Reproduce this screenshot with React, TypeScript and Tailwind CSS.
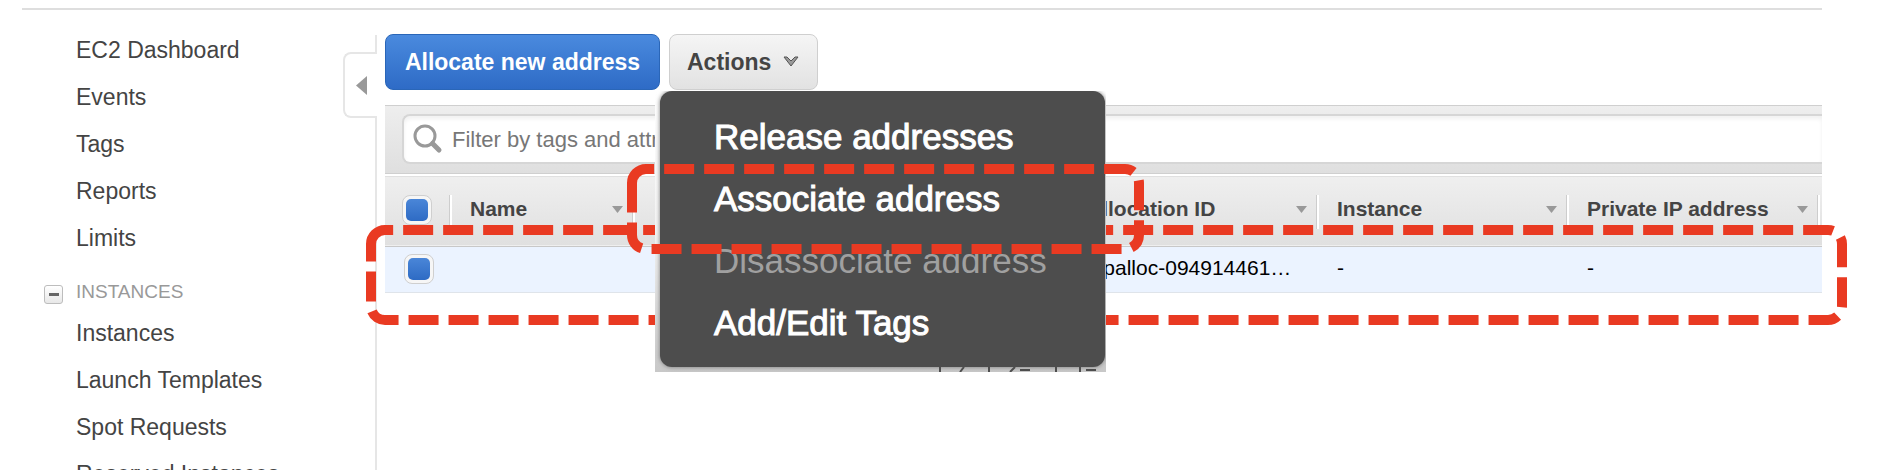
import React from "react";

const topLinks = ["EC2 Dashboard", "Events", "Tags", "Reports", "Limits"];
const instanceLinks = ["Instances", "Launch Templates", "Spot Requests", "Reserved Instances"];

const menuItems = [
  { label: "Release addresses" },
  { label: "Associate address" },
  { label: "Disassociate address", disabled: true },
  { label: "Add/Edit Tags" },
];

function NavList({ items }: { items: string[] }) {
  return (
    <ul>
      {items.map((item) => (
        <li key={item} className="h-[47px]">
          <a href="#" className="block pl-[76px] leading-[47px] whitespace-nowrap">
            {item}
          </a>
        </li>
      ))}
    </ul>
  );
}

function BlueCheckbox({ label }: { label: string }) {
  return (
    <input
      type="checkbox"
      defaultChecked
      aria-label={label}
      className="block size-[30px] appearance-none rounded-lg border border-[#cfcfcf] bg-[#f6f6f6] p-[3px] before:block before:size-[22px] before:rounded-[5px] before:bg-linear-to-b before:from-[#4a86d8] before:to-[#2e6bc4] before:content-['']"
    />
  );
}

function HeaderCell({ label }: { label: string }) {
  return (
    <th scope="col" className="p-0 text-left align-top font-bold">
      <div className="mt-[19px] flex h-[34px] items-center justify-between border-r-2 border-r-white pr-[10px] pb-[6px] pl-[18px] shadow-[inset_-1px_0_0_#cdcdcd]">
        <span className="whitespace-nowrap">{label}</span>
        <svg width="11" height="7" viewBox="0 0 11 7" aria-hidden="true">
          <path d="M0 0H11L5.500 7Z" fill="#999" />
        </svg>
      </div>
    </th>
  );
}

export default function App() {
  return (
    <div className="relative h-screen overflow-hidden bg-white font-['Liberation_Sans',Arial,sans-serif] text-[23px] text-[#444]">
      <div className="mr-[62px] ml-[22px] pt-2">
        <div className="h-[2px] bg-[#dedede]" />
      </div>

      <div className="flex">
        <nav aria-label="EC2" className="w-[343px] shrink-0 pt-[17px]">
          <NavList items={topLinks} />
          <div className="mt-[12px] flex h-[36px] items-center pl-[44px]">
            <button
              type="button"
              aria-label="Collapse instances"
              className="mt-[4px] flex size-[19px] items-center justify-center rounded-[3px] border border-[#bdbdbd] bg-linear-to-b from-white to-[#e8e8e8]"
            >
              <span className="h-[3px] w-[10px] bg-[#666]" />
            </button>
            <span className="ml-[13px] text-[19px] text-[#999]">INSTANCES</span>
          </div>
          <NavList items={instanceLinks} />
        </nav>

        <div className="flex w-[34px] shrink-0 flex-col pt-[25px]">
          <div className="h-[17px] border-r-2 border-[#e6e6e6]" />
          <button
            type="button"
            aria-label="Collapse sidebar"
            className="flex h-[66px] items-center justify-center rounded-l-lg border-2 border-r-0 border-[#e6e6e6]"
          >
            <svg width="11" height="19" viewBox="0 0 11 19" aria-hidden="true">
              <path d="M11 0V19L0 9.500Z" fill="#999" />
            </svg>
          </button>
          <div className="h-[400px] border-r-2 border-[#e6e6e6]" />
        </div>

        <main className="mr-[62px] ml-2 min-w-0 flex-1 pt-[24px]">
          <div className="flex items-start gap-[9px]">
            <button
              type="button"
              className="h-[56px] w-[275px] rounded-lg border border-[#2a66b8] bg-linear-to-b from-[#4a8ade] to-[#2e6bc6] font-bold whitespace-nowrap text-white"
            >
              Allocate new address
            </button>
            <button
              type="button"
              className="flex h-[56px] w-[149px] items-center gap-3 rounded-lg border border-[#cfcfcf] bg-linear-to-b from-[#f5f5f5] to-[#e2e2e2] pl-[17px] font-bold"
            >
              Actions
              <svg width="16" height="12" viewBox="0 0 16 12" aria-hidden="true">
                <path d="M1 1H4L8 5L12 1H15L8 10Z" fill="#999" stroke="#555" strokeLinejoin="round" />
              </svg>
            </button>
          </div>

          <div className="mt-[15px] h-[69px] border-y border-[#cfcfcf] bg-linear-to-b from-[#eeeeee] to-[#dfdfdf] pt-[8px] pl-[17px]">
            <label className="flex h-[50px] items-center rounded-l-lg border-2 border-r-0 border-[#d6d6d6] bg-white pl-[9px] shadow-[inset_0_3px_4px_#f1f1f1]">
              <svg width="30" height="30" viewBox="0 0 30 30" aria-hidden="true">
                <circle cx="12" cy="12" r="10" fill="none" stroke="#999" strokeWidth="3" />
                <path d="M19.500 19.500L26 26" stroke="#999" strokeWidth="5" strokeLinecap="round" />
              </svg>
              <input
                type="text"
                aria-label="Filter addresses"
                placeholder="Filter by tags and attributes or search by keyword"
                className="ml-[9px] min-w-0 flex-1 bg-transparent text-[22px] outline-none placeholder:text-[#777]"
              />
            </label>
          </div>

          <table className="w-full table-fixed border-collapse text-[21px]">
            <colgroup>
              <col className="w-[67px]" />
              <col className="w-[183px]" />
              <col className="w-[434px]" />
              <col className="w-[250px]" />
              <col className="w-[250px]" />
              <col className="w-[251px]" />
              <col />
            </colgroup>
            <thead>
              <tr className="h-[71px] border-t-2 border-b border-t-white border-b-[#c8c8c8] bg-linear-to-b from-[#efefef] to-[#e0e0e0]">
                <th scope="col" className="p-0 align-top">
                  <div className="mt-[19px] h-[34px] border-r-2 border-r-white pl-[17px] shadow-[inset_-1px_0_0_#cdcdcd]">
                    <BlueCheckbox label="Select all addresses" />
                  </div>
                </th>
                <HeaderCell label="Name" />
                <HeaderCell label="" />
                <HeaderCell label="Allocation ID" />
                <HeaderCell label="Instance" />
                <HeaderCell label="Private IP address" />
                <th className="p-0" />
              </tr>
            </thead>
            <tbody>
              <tr className="h-[46px] border-b border-[#dfe4ea] bg-[#ebf3ff] text-black">
                <td className="p-0 pl-[19px]">
                  <BlueCheckbox label="Select address" />
                </td>
                <td />
                <td />
                <td className="p-0 pb-[2px] pl-[18px]">
                  <div className="whitespace-nowrap">eipalloc-094914461…</div>
                </td>
                <td className="p-0 pb-[2px] pl-[18px]">-</td>
                <td className="p-0 pb-[2px] pl-[18px]">-</td>
                <td />
              </tr>
            </tbody>
          </table>
        </main>
      </div>

      <svg className="pointer-events-none absolute top-0 left-0" width="1884" height="470" aria-hidden="true">
        <path
          d="M371 244A14 14 0 0 1 385 230H1828A14 14 0 0 1 1842 244V306A14 14 0 0 1 1828 320H385A14 14 0 0 1 371 306V244"
          fill="none"
          stroke="#e93a22"
          strokeWidth="10"
          strokeDasharray="30 10"
        />
      </svg>

      <div className="absolute top-[91px] left-[655px] w-[451px] overflow-hidden bg-linear-to-b from-white via-[#f4f4f4] to-[#c8c8c8] pr-[1px] pb-[5px] pl-[5px]">
        <ul role="menu" className="rounded-xl bg-[#4d4d4d] pt-[15px] pb-[13px] shadow-[0_0_4px_#777]">
          {menuItems.map((item) => (
            <li key={item.label} role="none">
              <button
                type="button"
                role="menuitem"
                disabled={item.disabled}
                className="block h-[62px] w-full pl-[54px] text-left text-[35px] leading-[62px] text-white [-webkit-text-stroke:1px_white] disabled:text-[#a0a0a0] disabled:[-webkit-text-stroke:0px]"
              >
                {item.label}
              </button>
            </li>
          ))}
        </ul>
        <svg className="absolute right-[8px] bottom-0" width="160" height="5" viewBox="0 0 160 5" aria-hidden="true">
          <path
            d="M2 5V0M22 5L26 0M51 5V0M72 5L77 0M82 3H92M118 5V0M142 5V0M148 3H158"
            fill="none"
            stroke="#4d4d4d"
            strokeWidth="2"
          />
        </svg>
      </div>

      <svg className="pointer-events-none absolute top-0 left-0" width="1884" height="470" aria-hidden="true">
        <path
          d="M632 183A14 14 0 0 1 646 169H1125A14 14 0 0 1 1139 183V235A14 14 0 0 1 1125 249H646A14 14 0 0 1 632 235V183"
          fill="none"
          stroke="#e93a22"
          strokeWidth="10"
          strokeDasharray="30 10"
        />
      </svg>
    </div>
  );
}
